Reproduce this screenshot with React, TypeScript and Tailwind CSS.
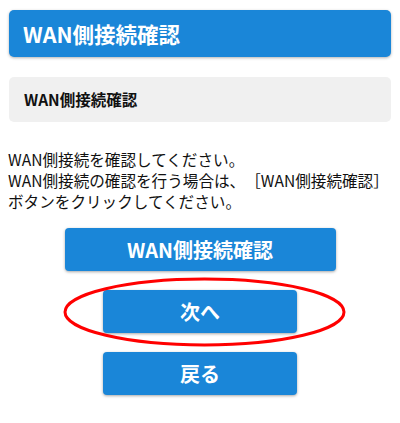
import React from 'react';

const font = { fontFamily: '"Noto Sans CJK JP", "Noto Sans", sans-serif' };

const ActionButton: React.FC<{ label: string; wide?: boolean }> = ({ label, wide }) => (
  <button
    className={
      wide
        ? 'w-[271px] h-[43px] rounded-[4px] bg-[#1a86d8] text-white text-[20px] font-bold shadow-[0_1px_3px_rgba(0,0,0,0.35)]'
        : 'w-[194px] h-[43px] rounded-[4px] bg-[#1a86d8] text-white text-[20px] font-bold shadow-[0_1px_3px_rgba(0,0,0,0.35)]'
    }
  >
    {label}
  </button>
);

const App: React.FC = () => {
  return (
    <div
      className="relative w-[400px] h-[423px] bg-white overflow-hidden text-[#111] [text-spacing-trim:space-all]"
      style={font}
    >
      <div className="px-[8px] pt-[10px]">
        <div className="mx-px h-[47px] rounded-[5px] bg-[#1a86d8] px-[14px] flex items-center shadow-[0_1px_3px_rgba(0,0,0,0.3)]">
          <h1 className="text-white text-[21.5px] font-bold leading-none">WAN側接続確認</h1>
        </div>

        <div className="mx-px mt-[20px] h-[45px] rounded-[5px] bg-[#f0f0f0] px-[15px] flex items-center">
          <h2 className="text-[15.5px] font-bold leading-none">WAN側接続確認</h2>
        </div>

        <p className="mt-[27px] text-[15.6px] leading-[21px] whitespace-nowrap">
          WAN側接続を確認してください。
          <br />
          WAN側接続の確認を行う場合は、［WAN側接続確認］
          <br />
          ボタンをクリックしてください。
        </p>
      </div>

      <div className="mt-[16px] flex flex-col items-center gap-[19px]">
        <ActionButton label="WAN側接続確認" wide />
        <ActionButton label="次へ" />
        <ActionButton label="戻る" />
      </div>

      {/* red annotation ring around the next button */}
      <svg className="absolute left-0 top-0 pointer-events-none" width="400" height="423">
        <ellipse cx="204.5" cy="312" rx="139.5" ry="33" fill="none" stroke="#f00" strokeWidth="3" />
      </svg>
    </div>
  );
};

export default App;
